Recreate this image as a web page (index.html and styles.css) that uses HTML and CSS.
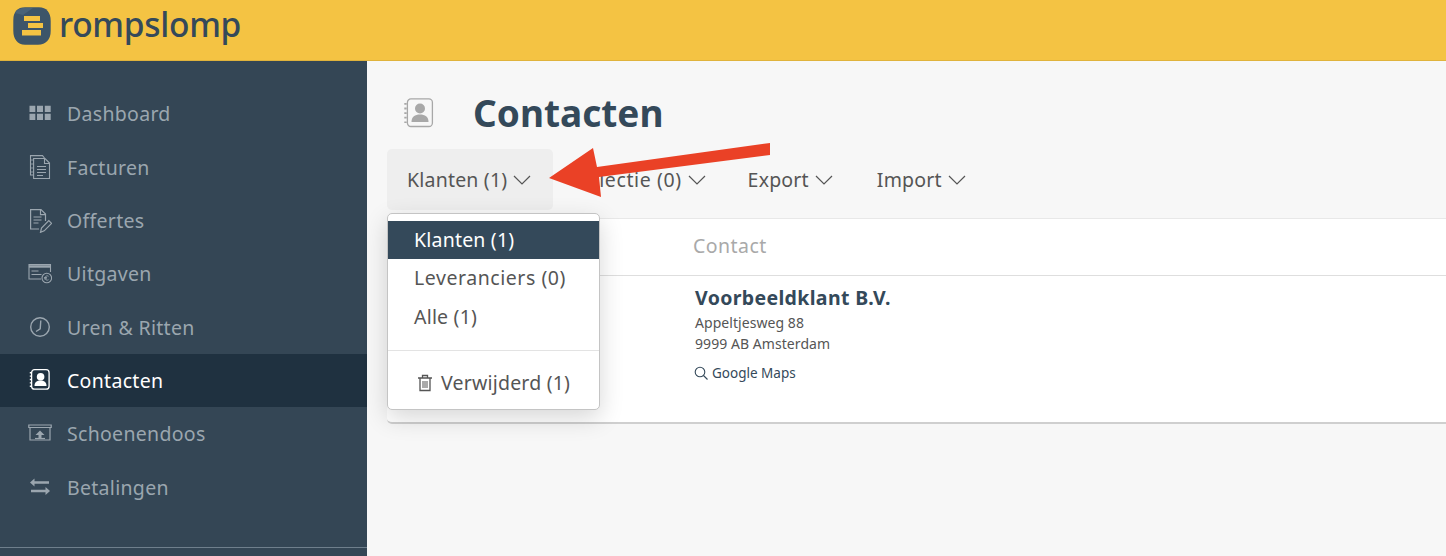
FILE: index.html
```html
<!DOCTYPE html>
<html lang="nl">
<head>
<meta charset="utf-8">
<title>Rompslomp - Contacten</title>
<link rel="stylesheet" href="styles.css">
</head>
<body>
<header class="topbar">
  <svg class="logo-mark" width="38" height="38" viewBox="0 0 38 38">
    <path d="M12 0.300H26C33.500 0.300 37.700 5.500 37.700 14V24C37.700 32.500 33 37.700 25 37.700H12C4.500 37.700 0.300 32 0.300 24V13C0.300 5 4.500 0.300 12 0.300Z" fill="#3d5569"/>
    <path d="M2 6C4 2.500 7 1 12 1L20 1 10 8Z" fill="#4a6378"/>
    <path d="M11 9H27V14H11Z" fill="#f4c343"/>
    <path d="M15 16H30V21H15Z" fill="#f4c343"/>
    <path d="M9 23H28V28.500H9Z" fill="#f4c343"/>
  </svg>
  <span class="logo-text">rompslomp</span>
</header>
<div class="layout">
  <nav class="sidebar">
    <ul class="nav-list">
      <li class="nav-item">
        <svg class="nav-icon" viewBox="0 0 24 24"><path fill="currentColor" d="M1.500 3.800h5.800v6.200H1.500zM9 3.800h6v6.200H9zM16.800 3.800h5.900v6.200h-5.900zM1.500 11.800h5.800v6.200H1.500zM9 11.800h6v6.200H9zM16.800 11.800h5.900v6.200h-5.900z"/></svg>
        <span>Dashboard</span>
      </li>
      <li class="nav-item">
        <svg class="nav-icon" viewBox="0 0 24 24" fill="none" stroke="currentColor" stroke-width="1.100"><path d="M5.500 20H2.500V.6h12l2 2.400"/><path d="M5.600 3.500H17l4.500 4.500v15.500H5.600z"/><path d="M16.500 3.500V8.500h5"/><path d="M9 11.500h9M9 14.500h9M9 17.500h9M9 20.500h6"/><path d="M2.500 5h3M2.500 9h3M2.500 13h3M2.500 17h3" stroke-width=".8"/></svg>
        <span>Facturen</span>
      </li>
      <li class="nav-item">
        <svg class="nav-icon" viewBox="0 0 24 24" fill="none" stroke="currentColor" stroke-width="1.200"><path d="M11 20H2.600V.6h10.400l4.500 4.500v7"/><path d="M12.500.6v5h5"/><path d="M5.500 8h8M5.500 11h8M5.500 14h5"/><path d="M12.500 23.300l1-4.300 7.300-7.400 2.800 2.800-7.400 7.400z"/></svg>
        <span>Offertes</span>
      </li>
      <li class="nav-item">
        <svg class="nav-icon" viewBox="0 0 24 24" fill="none" stroke="currentColor" stroke-width="1.100"><path d="M13 17H1V2.600h21.500V10"/><path d="M1 4.500h21.500" stroke-width="2.400"/><path d="M3.500 9h7M3.500 12.500h10"/><circle cx="18.800" cy="16" r="4.800"/><path d="M20.600 14.300a2.200 2.200 0 1 0 0 3.400M16 15.500h3M16 16.800h3" stroke-width=".8"/></svg>
        <span>Uitgaven</span>
      </li>
      <li class="nav-item">
        <svg class="nav-icon" viewBox="0 0 24 24" fill="none" stroke="currentColor" stroke-width="1.400"><circle cx="12" cy="12" r="9.300"/><path d="M12.800 5.500L12.200 13.800 8 16.500"/></svg>
        <span>Uren &amp; Ritten</span>
      </li>
      <li class="nav-item nav-item-active">
        <svg class="nav-icon" viewBox="0 0 24 24" fill="none" stroke="currentColor" stroke-width="1.300"><rect x="3.600" y="1.700" width="17.500" height="19.500" rx="3"/><path d="M2.600 4v16" stroke-dasharray="1.400 2" stroke-width="1.600"/><circle cx="12.600" cy="8.800" r="3.800" fill="currentColor" stroke="none"/><path d="M6.500 18c0-4 2.500-5.500 6-5.500s6 1.500 6 5.500z" fill="currentColor" stroke="none"/></svg>
        <span>Contacten</span>
      </li>
      <li class="nav-item">
        <svg class="nav-icon" viewBox="0 0 24 24" fill="none" stroke="currentColor" stroke-width="1.200"><path d="M2 5.500h20V18H2z"/><path d="M.8 3h22.400v2.500H.8z"/><path d="M12 8.500l4.500 4.500h-3v3.500h-3V13h-3z" fill="currentColor" stroke="none"/><path d="M7 16.500h10"/></svg>
        <span>Schoenendoos</span>
      </li>
      <li class="nav-item">
        <svg class="nav-icon" viewBox="0 0 24 24"><path fill="currentColor" d="M2 7.500l4.500-4v2.700H21v2.600H6.500v2.700zM22 16l-4.500-4v2.700H3v2.600h14.500V20z"/></svg>
        <span>Betalingen</span>
      </li>
    </ul>
    <div class="sidebar-rule"></div>
  </nav>
  <main class="content">
    <div class="title-row">
      <svg class="title-icon" viewBox="0 0 30 30" fill="none" stroke="#a8a8a8" stroke-width="1.300"><rect x="3.400" y=".9" width="25" height="27.600" rx="3.500"/><path d="M1.500 5v20" stroke-dasharray="1.800 2.800" stroke-width="2.400"/><circle cx="16" cy="10.500" r="5" fill="#a8a8a8" stroke="none"/><path d="M7.500 24c0-5.500 3.500-7.500 8.500-7.500s8.500 2 8.500 7.500z" fill="#a8a8a8" stroke="none"/></svg>
      <h1 class="page-title">Contacten</h1>
    </div>
    <div class="toolbar">
      <button class="tool tool-open">Klanten (1)<svg class="chev" viewBox="0 0 18 10"><path d="M1 1l8 8 8-8"/></svg></button>
      <button class="tool tool-select">Selectie (0)<svg class="chev" viewBox="0 0 18 10"><path d="M1 1l8 8 8-8"/></svg></button>
      <button class="tool">Export<svg class="chev" viewBox="0 0 18 10"><path d="M1 1l8 8 8-8"/></svg></button>
      <button class="tool tool-import">Import<svg class="chev" viewBox="0 0 18 10"><path d="M1 1l8 8 8-8"/></svg></button>
    </div>
    <section class="card">
      <div class="card-head"><span class="col-label">Contact</span></div>
      <div class="card-row">
        <div class="contact">
          <div class="contact-name">Voorbeeldklant B.V.</div>
          <div class="contact-line">Appeltjesweg 88</div>
          <div class="contact-line">9999 AB Amsterdam</div>
          <div class="maps">
            <svg class="maps-icon" viewBox="0 0 14 14" fill="none" stroke="#34495a" stroke-width="1.100"><circle cx="6" cy="6" r="4.800"/><path d="M9.500 9.500L13.500 13.500"/></svg>
            <span>Google Maps</span>
          </div>
        </div>
      </div>
    </section>
    <div class="dropdown">
      <div class="dd-item dd-active">Klanten (1)</div>
      <div class="dd-item dd-wide">Leveranciers (0)</div>
      <div class="dd-item">Alle (1)</div>
      <div class="dd-rule"></div>
      <div class="dd-item dd-trash">
        <svg class="trash" viewBox="0 0 16 18" fill="none" stroke="#555" stroke-width="1.300"><path d="M1 4h14M5.500 4V1.500h5V4M3 4v12.500h10V4"/><path d="M6 7v7M8 7v7M10 7v7" stroke-width="1"/></svg>
        <span>Verwijderd (1)</span>
      </div>
    </div>
  </main>
</div>
<svg class="arrow" width="1446" height="556" viewBox="0 0 1446 556"><polygon fill="#ea4126" points="549,178 593,148 597,167 770,143 770,155 599,177 601,197"/></svg>
</body>
</html>
```
FILE: styles.css
```css
* { box-sizing: border-box; }
html, body { margin: 0; height: 100%; overflow: hidden; }
body { font-family: "Noto Sans", sans-serif; background: #f7f7f7; color: #555; }

.topbar { height: 61px; background: #f4c343; border-bottom: 1px solid #e0b33c; display: flex; align-items: flex-start; padding: 7px 0 0 13px; gap: 8px; }
.logo-mark { flex: none; }
.logo-text { font-size: 33.500px; line-height: 34px; font-weight: 500; color: #34495a; letter-spacing: -.3px; }

.layout { display: flex; height: 495px; }
.sidebar { width: 367px; flex: none; background: #344655; padding-top: 26.350px; position: relative; }
.nav-list { list-style: none; margin: 0; padding: 0; }
.nav-item { height: 53.300px; display: flex; align-items: center; padding-left: 28px; gap: 15px; font-size: 19.500px; letter-spacing: .3px; color: #9ba6af; }
.nav-item-active { background: #1f3140; color: #fff; }
.nav-icon { width: 24px; height: 24px; flex: none; }
.sidebar-rule { position: absolute; left: 0; right: 0; top: 486px; height: 1px; background: #6f7f8c; }

.content { flex: 1; min-width: 0; position: relative; padding: 29px 0 0 20px; }
.title-row { display: flex; align-items: center; height: 48px; padding: 0 0 2px 17px; gap: 39px; }
.title-icon { width: 30px; height: 30px; flex: none; }
.page-title { margin: 0; font-size: 37px; line-height: 46px; font-weight: 700; color: #34495a; }

.toolbar { display: flex; height: 61px; margin-top: 11px; }
.tool { height: 61px; border: 0; background: none; font: inherit; font-size: 19.500px; letter-spacing: .2px; color: #555; border-radius: 5px; display: flex; align-items: center; gap: 6px; padding: 0 22px 0 20px; }
.tool-open { background: #eeeeee; }
.tool-select { letter-spacing: .6px; padding-left: 23px; }
.tool-import { padding-left: 22px; }
.chev { width: 18px; height: 10px; fill: none; stroke: #555; stroke-width: 1.200; }

.card { margin-top: 8px; background: #fff; height: 206px; border-top: 1px solid #e8e8e8; border-bottom: 2px solid #cfcfcf; border-radius: 0 0 0 5px; }
.card-head { height: 57px; border-bottom: 1px solid #dedede; padding: 0 0 4px 306px; display: flex; align-items: center; }
.col-label { font-size: 19.500px; letter-spacing: .45px; color: #a9a9a9; }
.card-row { padding: 9px 0 0 308px; }
.contact-name { font-size: 19.500px; line-height: 26px; font-weight: 700; color: #34495a; letter-spacing: .35px; margin-bottom: 1px; }
.contact-line { font-size: 14px; letter-spacing: .06px; line-height: 21px; color: #555; }
.maps { display: flex; align-items: center; gap: 4px; margin: 9px 0 0 -1px; font-size: 13.500px; line-height: 20px; color: #34495a; }
.maps-icon { width: 14px; height: 14px; flex: none; }

.dropdown { position: absolute; left: 20px; top: 152px; width: 213px; height: 197px; background: #fff; border: 1px solid #c4c4c4; border-radius: 5px; padding-top: 7px; box-shadow: 0 8px 24px rgba(0,0,0,.16); }
.dd-item { height: 38px; display: flex; align-items: center; padding: 0 0 1px 26px; font-size: 19.500px; letter-spacing: .2px; color: #555; margin-bottom: 1px; }
.dd-active { background: #34495a; color: #fff; margin-bottom: 0; }
.dd-wide { letter-spacing: .55px; }
.dd-rule { height: 1px; background: #e3e3e3; margin: 14px 0 13px; }
.dd-trash { padding-left: 29px; gap: 8px; }
.trash { width: 16px; height: 18px; flex: none; }

.arrow { position: absolute; left: 0; top: 0; pointer-events: none; }
```
